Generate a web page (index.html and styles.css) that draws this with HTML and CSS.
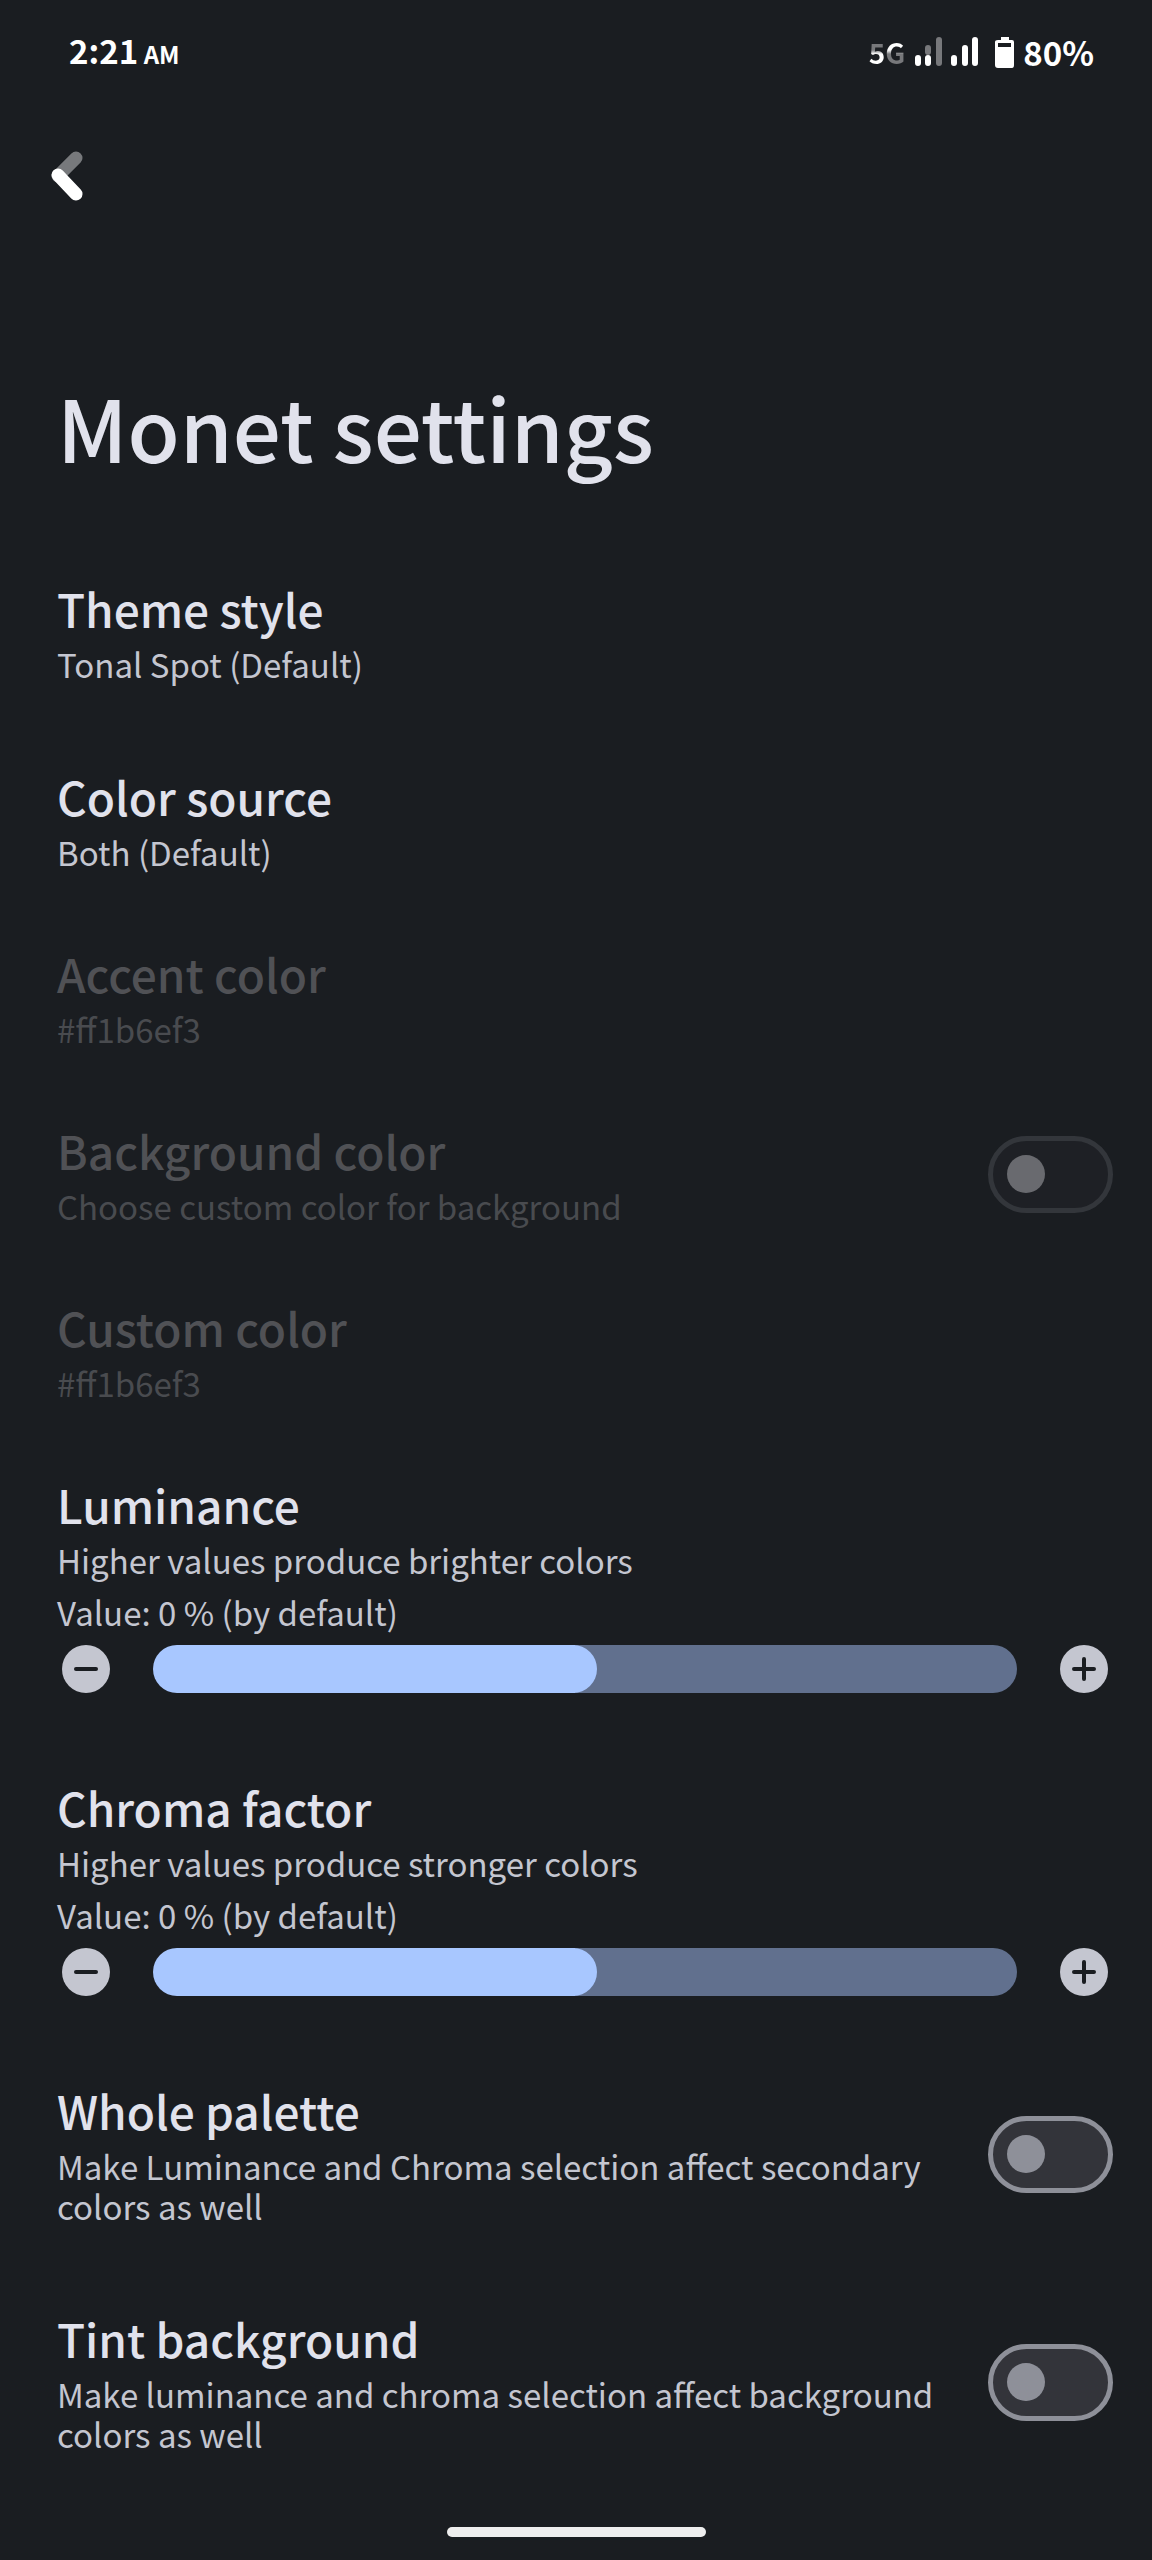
FILE: index.html
```html
<!DOCTYPE html>
<html lang="en">
<head>
<meta charset="utf-8">
<meta name="viewport" content="width=device-width, initial-scale=1">
<title>Monet settings</title>
<link rel="stylesheet" href="styles.css">
</head>
<body>
<div class="screen">
  <div class="status-bar">
    <div class="clock">2:21 <span class="meridiem">AM</span></div>
    <div class="indicators">
      <span class="network"><span class="five">5</span><span class="gee">G</span></span>
      <svg class="signals" width="64" height="32" viewBox="0 0 64 32" stroke-width="6" stroke-linecap="round" aria-hidden="true">
        <path d="M14 12V16M25 4V27" stroke="#77787b"/>
        <path d="M4 22V27M14 22V27M40 22V27M51 12V27M61 4V27" stroke="#fff"/>
      </svg>
      <svg class="battery" width="20" height="32" viewBox="0 0 20 32" aria-hidden="true">
        <path fill="#fff" fill-rule="evenodd" d="M6 1H14V4H17Q19 4 19 6V29Q19 32 17 32H3Q0 32 0 29V6Q0 4 3 4H6ZM3 7V11H16V7Z"/>
      </svg>
      <span>80%</span>
    </div>
  </div>

  <header class="header">
    <button class="back" type="button" aria-label="Back">
      <svg width="34" height="52" viewBox="0 0 34 52" fill="none" stroke-width="13" stroke-linecap="round">
        <path d="M9 26L27 8" stroke="#77797c"/>
        <path d="M9 25L27 44" stroke="#fff"/>
      </svg>
    </button>
    <h1 class="title">Monet settings</h1>
  </header>

  <main class="settings">
    <section class="row">
      <div class="text">
        <h2 class="name">Theme style</h2>
        <p class="summary">Tonal Spot (Default)</p>
      </div>
    </section>
    <section class="row compact">
      <div class="text">
        <h2 class="name">Color source</h2>
        <p class="summary">Both (Default)</p>
      </div>
    </section>
    <section class="row compact disabled">
      <div class="text">
        <h2 class="name">Accent color</h2>
        <p class="summary">#ff1b6ef3</p>
      </div>
    </section>
    <section class="row compact disabled">
      <div class="text">
        <h2 class="name"><label for="background-color">Background color</label></h2>
        <p class="summary">Choose custom color for background</p>
      </div>
      <input class="switch" type="checkbox" role="switch" id="background-color" disabled>
    </section>
    <section class="row compact disabled">
      <div class="text">
        <h2 class="name">Custom color</h2>
        <p class="summary">#ff1b6ef3</p>
      </div>
    </section>
    <section class="row stacked">
      <div class="text">
        <h2 class="name"><label for="luminance">Luminance</label></h2>
        <p class="summary">Higher values produce brighter colors</p>
        <p class="value">Value: 0 % (by default)</p>
      </div>
      <div class="adjust">
        <button class="step" type="button" aria-label="Decrease luminance">
          <svg width="24" height="24" viewBox="0 0 24 24"><path d="M2 12H22"/></svg>
        </button>
        <input class="slider" type="range" id="luminance" min="0" max="100" value="50">
        <button class="step" type="button" aria-label="Increase luminance">
          <svg width="24" height="24" viewBox="0 0 24 24"><path d="M2 12H22M12 2V22"/></svg>
        </button>
      </div>
    </section>
    <section class="row stacked">
      <div class="text">
        <h2 class="name"><label for="chroma">Chroma factor</label></h2>
        <p class="summary">Higher values produce stronger colors</p>
        <p class="value">Value: 0 % (by default)</p>
      </div>
      <div class="adjust">
        <button class="step" type="button" aria-label="Decrease chroma factor">
          <svg width="24" height="24" viewBox="0 0 24 24"><path d="M2 12H22"/></svg>
        </button>
        <input class="slider" type="range" id="chroma" min="0" max="100" value="50">
        <button class="step" type="button" aria-label="Increase chroma factor">
          <svg width="24" height="24" viewBox="0 0 24 24"><path d="M2 12H22M12 2V22"/></svg>
        </button>
      </div>
    </section>
    <section class="row">
      <div class="text">
        <h2 class="name"><label for="whole-palette">Whole palette</label></h2>
        <p class="summary">Make Luminance and Chroma selection affect secondary colors as well</p>
      </div>
      <input class="switch" type="checkbox" role="switch" id="whole-palette">
    </section>
    <section class="row">
      <div class="text">
        <h2 class="name"><label for="tint-background">Tint background</label></h2>
        <p class="summary">Make luminance and chroma selection affect background colors as well</p>
      </div>
      <input class="switch" type="checkbox" role="switch" id="tint-background">
    </section>
  </main>

  <div class="gesture-bar"></div>
</div>
</body>
</html>
```
FILE: styles.css
```css
* {
  box-sizing: border-box;
}

body {
  margin: 0;
  background: #1a1d21;
  color: #e1e2ec;
  font-family: "Noto Sans CJK SC", "Noto Sans", sans-serif;
  font-weight: 500;
}

h1, h2, p {
  margin: 0;
  font-weight: 500;
}

button {
  padding: 0;
  border: 0;
  background: none;
  cursor: pointer;
}

svg {
  display: block;
}

.screen {
  display: flex;
  flex-direction: column;
  min-height: 100vh;
}

.status-bar {
  display: flex;
  justify-content: space-between;
  align-items: center;
  height: 104px;
  padding: 0 58px 0 69px;
  color: #fff;
  font-size: 33px;
  font-weight: 700;
  line-height: 40px;
}

.meridiem {
  margin-left: -2px;
  font-size: 24px;
}

.indicators {
  display: flex;
  align-items: center;
}

.network {
  font-size: 28px;
}

.five,
.gee {
  background: linear-gradient(#77787b 45%, #fff 55%);
  background-clip: text;
  color: transparent;
}

.gee {
  background-image: linear-gradient(#fff 45%, #77787b 55%);
}

.signals {
  margin-left: 9px;
}

.battery {
  margin: 0 8px 0 17px;
}

.header {
  padding: 46px 49px 0;
}

.back {
  display: block;
}

.title {
  padding: 164px 8px 0;
  font-size: 85px;
  line-height: 120px;
}

.settings {
  padding-top: 56px;
}

.row {
  display: flex;
  align-items: center;
  justify-content: space-between;
  gap: 28px;
  padding: 36px 39px 46px 57px;
}

.compact {
  padding-bottom: 35px;
}

.stacked {
  flex-direction: column;
  align-items: stretch;
  gap: 0;
  padding-bottom: 48px;
}

.text {
  flex: 1;
}

.name {
  font-size: 46px;
  line-height: 60px;
}

.summary,
.value {
  color: #c4c6d0;
  font-size: 33px;
  font-weight: 400;
  line-height: 40px;
}

.summary {
  margin-top: 6px;
}

.value {
  margin-top: 12px;
}

.disabled .name {
  color: #505155;
}

.disabled .summary {
  color: #494b4f;
}

.switch {
  flex: none;
  display: flex;
  align-items: center;
  width: 125px;
  height: 77px;
  margin: 2px 0 0;
  padding: 0 14px;
  border: 5px solid #8e9099;
  border-radius: 39px;
  background: #33343a;
  appearance: none;
}

.switch::before {
  content: "";
  width: 38px;
  height: 38px;
  border-radius: 50%;
  background: #8e9099;
}

.switch:checked {
  justify-content: flex-end;
}

.switch:disabled {
  border-color: #33363b;
  background: #1e2025;
}

.switch:disabled::before {
  background: #696a6f;
}

.adjust {
  display: flex;
  align-items: center;
  gap: 43px;
  padding: 13px 5px 0;
}

.step {
  display: grid;
  place-items: center;
  flex: none;
  width: 48px;
  height: 48px;
  border-radius: 50%;
  background: #c4c6d0;
}

.step path {
  stroke: #1a1d21;
  stroke-width: 4;
  stroke-linecap: round;
}

.slider {
  flex: 1;
  min-width: 0;
  height: 48px;
  margin: 0;
  border-radius: 24px;
  background: linear-gradient(#a8c7ff, #a8c7ff) 0 0 / calc(50% - 10px) 100% no-repeat #61708e;
  appearance: none;
}

.slider::-webkit-slider-thumb {
  width: 24px;
  height: 48px;
  border-radius: 0 24px 24px 0;
  background: #a8c7ff;
  appearance: none;
}

.gesture-bar {
  width: 259px;
  height: 10px;
  margin: auto auto 23px;
  border-radius: 5px;
  background: #eee;
}
```
